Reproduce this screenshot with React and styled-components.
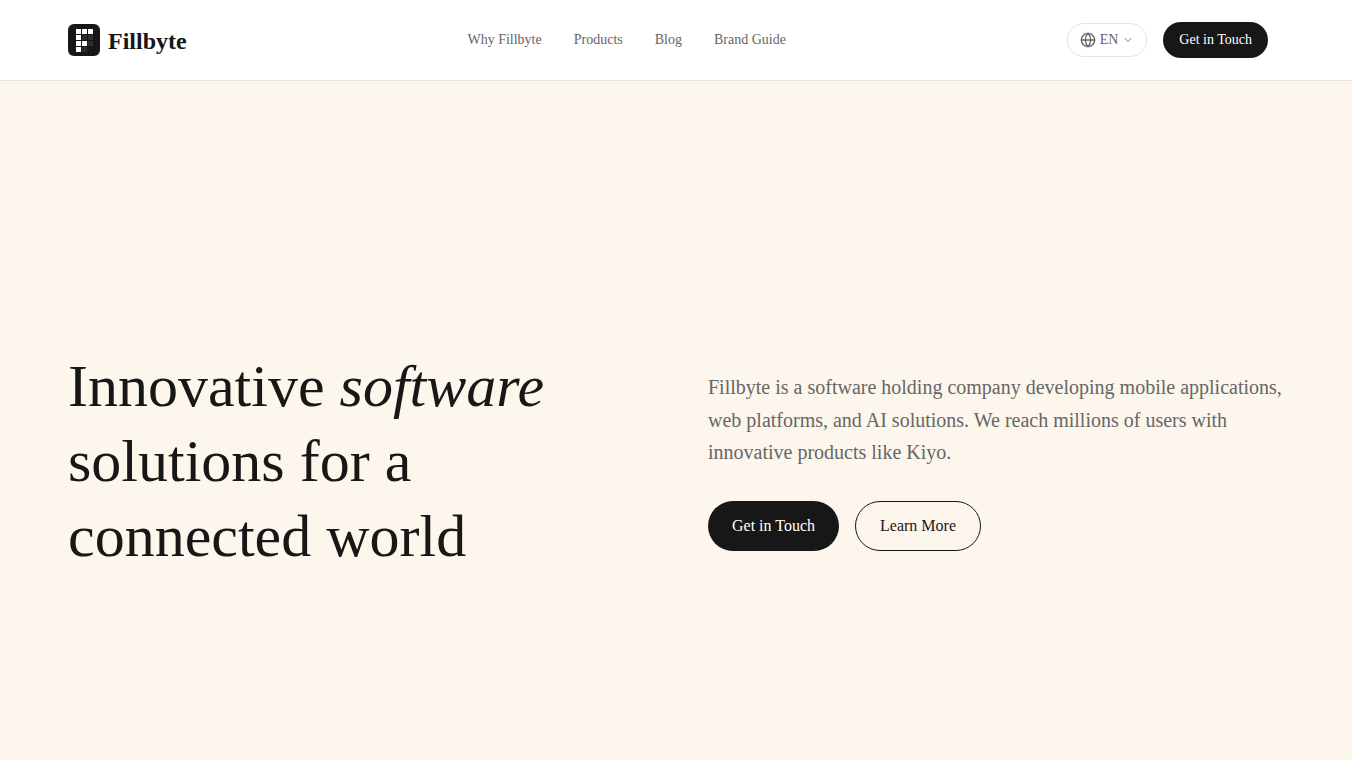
import React from 'react';
import styled, { createGlobalStyle } from 'styled-components';

const GlobalStyle = createGlobalStyle`
  html, body {
    margin: 0;
    padding: 0;
    background: #fdf6ec;
  }
  body {
    font-family: "Liberation Serif", "Times New Roman", serif;
    color: #171717;
    overflow: hidden;
  }
`;

const Page = styled.div`
  width: 1352px;
  height: 760px;
  display: flex;
  flex-direction: column;
`;

const Header = styled.header`
  height: 80px;
  flex: none;
  background: #fff;
  border-bottom: 1px solid #e5e5e5;
  display: flex;
  justify-content: space-between;
  align-items: center;
  padding: 0 84px 0 68px;
`;

const Brand = styled.a`
  display: flex;
  align-items: center;
  gap: 8px;
`;

const BrandName = styled.span`
  font-size: 24px;
  font-weight: 700;
  line-height: 32px;
  padding-top: 1px;
  color: #171717;
`;

const Nav = styled.nav`
  display: flex;
  gap: 32px;
`;

const NavLink = styled.a`
  font-size: 14px;
  line-height: 20px;
  color: #666;
`;

const Actions = styled.div`
  display: flex;
  align-items: center;
  gap: 16px;
`;

const LangButton = styled.button`
  display: flex;
  align-items: center;
  height: 34px;
  padding: 0 12px;
  gap: 4px;
  background: #fff;
  border: 1px solid #e5e5e5;
  border-radius: 999px;
  font: inherit;
  font-size: 14px;
  color: #666;
`;

const Pill = styled.a`
  display: inline-flex;
  align-items: center;
  justify-content: center;
  box-sizing: border-box;
  border-radius: 999px;
  height: ${(p) => (p.$large ? '50px' : '36px')};
  padding: 0 ${(p) => (p.$large ? '24px' : '16px')};
  font-size: ${(p) => (p.$large ? '16px' : '14px')};
  background: ${(p) => (p.$outline ? 'transparent' : '#171717')};
  color: ${(p) => (p.$outline ? '#171717' : '#fff')};
  border: ${(p) => (p.$outline ? '1px solid #171717' : 'none')};
`;

const Hero = styled.main`
  flex: 1;
  display: grid;
  grid-template-columns: 640px 1fr;
  align-items: center;
  padding: 81px 68px 0;
  background: #fdf6ec;
`;

const Title = styled.h1`
  margin: 0;
  font-size: 60px;
  font-weight: 400;
  line-height: 75px;
  color: #171717;
  em {
    font-style: italic;
  }
`;

const Side = styled.div`
  display: flex;
  flex-direction: column;
  gap: 32px;
  margin-right: -20px;
`;

const Lead = styled.p`
  margin: 0;
  font-size: 20px;
  line-height: 32.5px;
  color: #666;
`;

const Buttons = styled.div`
  display: flex;
  gap: 16px;
`;

// logo squares: [x, y, opacity]
const CELLS = [
  [8, 5, 1], [14, 5, 1], [20, 5, 1],
  [8, 11, 1], [14, 11, 0.1], [20, 11, 0.1],
  [8, 17, 1], [14, 17, 1], [20, 17, 0.1],
  [8, 23, 1], [14, 23, 0.1],
];

const Logo = () => (
  <svg width="32" height="32" viewBox="0 0 32 32">
    <rect width="32" height="32" rx="6" fill="#171717" />
    {CELLS.map(([x, y, o]) => (
      <rect key={`${x}-${y}`} x={x} y={y} width="5" height="5" fill="#fff" opacity={o} />
    ))}
  </svg>
);

const Globe = () => (
  <svg width="16" height="16" viewBox="0 0 24 24" fill="none" stroke="#666" strokeWidth="2" strokeLinecap="round" strokeLinejoin="round">
    <circle cx="12" cy="12" r="10" />
    <path d="M12 2a14.5 14.5 0 0 0 0 20 14.5 14.5 0 0 0 0-20" />
    <path d="M2 12h20" />
  </svg>
);

const Chevron = () => (
  <svg width="12" height="12" viewBox="0 0 24 24" fill="none" stroke="#666" strokeWidth="1.75" strokeLinecap="round" strokeLinejoin="round">
    <path d="m6 9 6 6 6-6" />
  </svg>
);

export default function App() {
  return (
    <Page>
      <GlobalStyle />
      <Header>
        <Brand>
          <Logo />
          <BrandName>Fillbyte</BrandName>
        </Brand>
        <Nav>
          <NavLink>Why Fillbyte</NavLink>
          <NavLink>Products</NavLink>
          <NavLink>Blog</NavLink>
          <NavLink>Brand Guide</NavLink>
        </Nav>
        <Actions>
          <LangButton>
            <Globe />
            EN
            <Chevron />
          </LangButton>
          <Pill>Get in Touch</Pill>
        </Actions>
      </Header>
      <Hero>
        <Title>
          Innovative <em>software</em>
          <br />
          solutions for a
          <br />
          connected world
        </Title>
        <Side>
          <Lead>
            Fillbyte is a software holding company developing mobile applications, web platforms, and AI solutions. We reach millions of users with innovative products like Kiyo.
          </Lead>
          <Buttons>
            <Pill $large>Get in Touch</Pill>
            <Pill $large $outline>Learn More</Pill>
          </Buttons>
        </Side>
      </Hero>
    </Page>
  );
}
